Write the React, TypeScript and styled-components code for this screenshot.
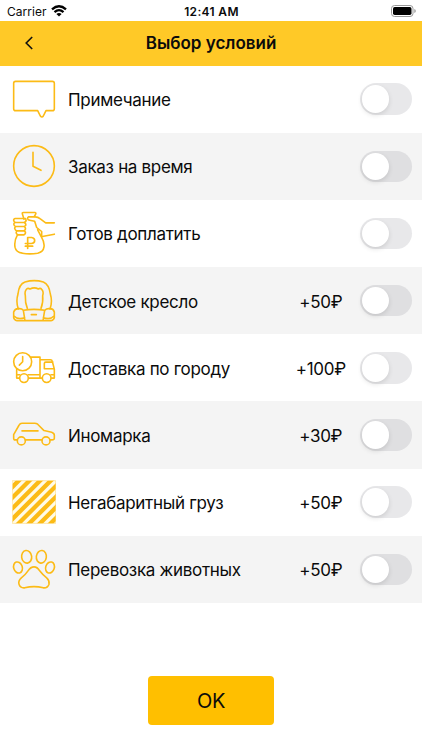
import React, { useState } from "react";
import styled, { createGlobalStyle } from "styled-components";

const GlobalStyle = createGlobalStyle`
  * { box-sizing: border-box; }
  body { margin: 0; background: #fff; }
`;

const Screen = styled.main`
  width: 422px;
  height: 750px;
  display: flex;
  flex-direction: column;
  overflow: hidden;
  background: #fff;
  color: #0b0b0b;
  font-family: Inter, Roboto, sans-serif;
`;

const StatusBar = styled.div`
  height: 21px;
  flex: none;
  display: grid;
  grid-template-columns: 1fr auto 1fr;
  align-items: center;
  padding: 1px 6px 0 7px;
  font-size: 12px;
`;

const Carrier = styled.div`
  display: flex;
  align-items: center;
  gap: 4px;
  letter-spacing: 0.05px;
`;

const Clock = styled.div`
  font-weight: 600;
  letter-spacing: 0.35px;
`;

const BatterySlot = styled.div`
  display: flex;
  justify-content: flex-end;
`;

const Header = styled.header`
  height: 44.5px;
  flex: none;
  display: grid;
  grid-template-columns: 58px 1fr 58px;
  align-items: center;
  background: #ffc927;
`;

const BackButton = styled.button`
  border: 0;
  padding: 0;
  height: 44px;
  display: flex;
  align-items: center;
  justify-content: center;
  background: none;
`;

const Title = styled.h1`
  margin: 0;
  text-align: center;
  font-size: 17px;
  font-weight: 600;
`;

const OptionList = styled.ul`
  margin: 0;
  padding: 0;
  list-style: none;
`;

const OptionRow = styled.li`
  height: 67.2px;
  display: grid;
  grid-template-columns: 44px 1fr 74px 52px;
  align-items: center;
  padding: 0 10.5px 0 12px;
  background: #fff;
  &:nth-child(even) { background: #f4f4f4; }
`;

const Icon = styled.svg`
  width: 44px;
  height: 44px;
  fill: none;
  stroke: #fcbb16;
  stroke-width: 4.8;
  stroke-linecap: round;
  stroke-linejoin: round;
`;

const Label = styled.span`
  padding: 2px 0 0 12px;
  font-size: 17px;
  letter-spacing: -0.31px;
  white-space: nowrap;
`;

const Price = styled.span`
  padding: 2px 3.5px 0 0;
  text-align: center;
  font-size: 17px;
  letter-spacing: -0.3px;
  white-space: nowrap;
`;

const Toggle = styled.button<{ $on: boolean }>`
  width: 52px;
  height: 31.5px;
  border: 0;
  border-radius: 16px;
  padding: 2px;
  display: flex;
  justify-content: ${(p) => (p.$on ? "flex-end" : "flex-start")};
  background: ${(p) => (p.$on ? "#34c759" : "rgba(120, 120, 128, 0.17)")};
`;

const Knob = styled.span`
  width: 27.5px;
  height: 27.5px;
  border-radius: 50%;
  background: #fff;
  box-shadow: 0 2px 5px rgba(0, 0, 0, 0.12);
`;

const Footer = styled.footer`
  flex: 1;
  display: flex;
  justify-content: center;
  align-items: flex-start;
  padding-top: 73.4px;
`;

const OkButton = styled.button`
  width: 126px;
  height: 48.5px;
  border: 0;
  border-radius: 4px;
  background: #ffbf00;
  color: #0b0b0b;
  font-family: inherit;
  font-size: 20px;
  letter-spacing: -0.3px;
`;

const NoteIcon = () => (
  <Icon viewBox="36 33 132 132">
    <path d="M47 46H157Q163 46 163 52V128Q163 134 157 134H138L130 150Q126 156 121 150L113 134H47Q41 134 41 128V52Q41 46 47 46Z" />
  </Icon>
);

const ClockIcon = () => (
  <Icon viewBox="36 235 132 132">
    <circle cx="102" cy="301" r="61" />
    <path d="M99 260V302L123 314" />
  </Icon>
);

const MoneyIcon = () => (
  <Icon viewBox="36 34.5 132 132">
    <path d="M72 59L67 43Q66 39 70 39H105Q109 40 107 44L103 51" />
    <path d="M163 70H137L121 58Q114 52 105 52H86Q82 54 83 58Q84 62 89 62L104 65L110 84L125 96V112L131 110L163 104" />
    <path d="M76 57H46Q40 58 41 63Q42 68 47 69H72Q79 67 78 62Q78 58 76 57ZM46 69Q40 71 42 76Q43 80 48 81H73Q79 79 77 73L73 69M48 81Q42 84 45 89Q46 93 51 94H72Q78 91 76 85L73 81M52 94Q46 98 50 103L54 106H72Q78 103 76 97L72 94" />
    <path d="M52 107Q42 124 45 143Q48 159 67 161Q89 165 113 161Q130 157 132 142Q134 128 124 112M124 112L113 91" />
    <path d="M83 147V114H95Q104 115 104 123Q104 132 94 132H76M76 140H98" strokeWidth="5" />
  </Icon>
);

const SeatIcon = () => (
  <Icon viewBox="36 236 132 132">
    <path d="M55 326Q47 304 54 281Q57 251 75 245Q103 237 130 245Q147 252 151 281Q158 304 150 326" />
    <path d="M82 324Q75 307 76 286Q73 273 80 266Q84 262 90 266Q103 259 115 266Q121 262 125 267Q132 274 128 286Q130 307 123 324" />
    <path d="M70 330Q102 324 134 330L129 361H75ZM70 330Q65 324 56 325Q45 324 41 335V352Q42 359 51 361H75M134 330Q140 324 149 325Q160 324 163 335V352Q162 359 153 361H129M42 347Q53 359 74 352M162 347Q151 359 130 352M94 343H109" />
  </Icon>
);

const TruckIcon = () => (
  <Icon viewBox="36 35.7 132 132">
    <circle cx="68" cy="83" r="27" />
    <circle cx="72" cy="132" r="13" />
    <circle cx="140" cy="132" r="13" />
    <path d="M68 67V83L58 93M92 69H120V132M50 106V132H58M86 132H126M120 77H151Q156 77 157 82L163 105V132H154M159 84H137Q133 84 133 88V104H162M51 122H59M85 122H119M153 122H162" />
  </Icon>
);

const CarIcon = () => (
  <Icon viewBox="36 237.3 132 132">
    <circle cx="64" cy="321" r="12" />
    <circle cx="138" cy="321" r="12" />
    <path d="M52 318H45Q41 318 41 312V302L57 274Q60 268 66 268H104Q109 268 113 271L132 290L155 295Q163 298 163 304V313Q163 318 156 318H150M76 318H126M66 291H114" />
  </Icon>
);

const CargoIcon = () => (
  <Icon viewBox="36 36.9 132 132">
    <defs>
      <clipPath id="cargo"><rect x="38" y="39" width="129" height="128" /></clipPath>
    </defs>
    <rect x="38" y="39" width="129" height="128" fill="#fffbe8" stroke="none" />
    <g clipPath="url(#cargo)" strokeWidth="13" strokeLinecap="butt">
      {[-2, -1, 0, 1, 2, 3, 4, 5, 6].map((i) => (
        <path key={i} d={`M28 ${99 + i * 32}L178 ${-51 + i * 32}`} />
      ))}
    </g>
    <rect x="38" y="39" width="129" height="128" strokeWidth="2" opacity="0.5" />
  </Icon>
);

const PawIcon = () => (
  <Icon viewBox="36 238.5 132 132">
    <ellipse cx="80" cy="268" rx="15" ry="19" transform="rotate(-8 80 268)" />
    <ellipse cx="124" cy="268" rx="15" ry="19" transform="rotate(8 124 268)" />
    <ellipse cx="54" cy="300" rx="13" ry="17" transform="rotate(-18 54 300)" />
    <ellipse cx="150" cy="300" rx="13" ry="17" transform="rotate(18 150 300)" />
    <path d="M102 298Q112 298 119 310Q128 322 140 331Q149 339 147 350Q143 362 130 361Q102 354 74 361Q60 362 57 350Q54 340 64 331Q76 322 84 310Q92 298 102 298Z" />
  </Icon>
);

const options = [
  { label: "Примечание", icon: NoteIcon },
  { label: "Заказ на время", icon: ClockIcon },
  { label: "Готов доплатить", icon: MoneyIcon },
  { label: "Детское кресло", icon: SeatIcon, price: "+50₽" },
  { label: "Доставка по городу", icon: TruckIcon, price: "+100₽" },
  { label: "Иномарка", icon: CarIcon, price: "+30₽" },
  { label: "Негабаритный груз", icon: CargoIcon, price: "+50₽" },
  { label: "Перевозка животных", icon: PawIcon, price: "+50₽" },
];

export default function App() {
  const [enabled, setEnabled] = useState<Record<string, boolean>>({});
  const toggle = (label: string) => setEnabled((s) => ({ ...s, [label]: !s[label] }));

  return (
    <Screen>
      <GlobalStyle />
      <StatusBar>
        <Carrier>
          Carrier
          <svg width="16" height="12" viewBox="0 0 16 12" fill="none" stroke="#000" strokeWidth="2.3">
            <path d="M1 4.4Q8-1.9 15 4.4M3.5 7.1Q8 3.1 12.5 7.1" />
            <path d="M5.4 9Q8 7 10.6 9L8 11.5Z" fill="#000" stroke="none" />
          </svg>
        </Carrier>
        <Clock>12:41 AM</Clock>
        <BatterySlot>
          <svg width="25" height="12" viewBox="0 0 25 12">
            <rect x="0.5" y="0.5" width="21.5" height="11" rx="3" fill="none" stroke="#999" />
            <rect x="2" y="2" width="18.5" height="8" rx="1.7" fill="#000" />
            <path d="M23.3 4Q24.8 4.6 24.8 6T23.3 8Z" fill="#999" />
          </svg>
        </BatterySlot>
      </StatusBar>
      <Header>
        <BackButton aria-label="Назад">
          <svg width="8" height="14" viewBox="0 0 8 14" fill="none" stroke="#111" strokeWidth="1.6">
            <path d="M7.2 1L1.2 7L7.2 13" />
          </svg>
        </BackButton>
        <Title>Выбор условий</Title>
      </Header>
      <OptionList>
        {options.map(({ label, icon: Glyph, price }) => (
          <OptionRow key={label}>
            <Glyph />
            <Label>{label}</Label>
            <Price>{price}</Price>
            <Toggle
              $on={!!enabled[label]}
              role="switch"
              aria-checked={!!enabled[label]}
              aria-label={label}
              onClick={() => toggle(label)}
            >
              <Knob />
            </Toggle>
          </OptionRow>
        ))}
      </OptionList>
      <Footer>
        <OkButton>OK</OkButton>
      </Footer>
    </Screen>
  );
}
